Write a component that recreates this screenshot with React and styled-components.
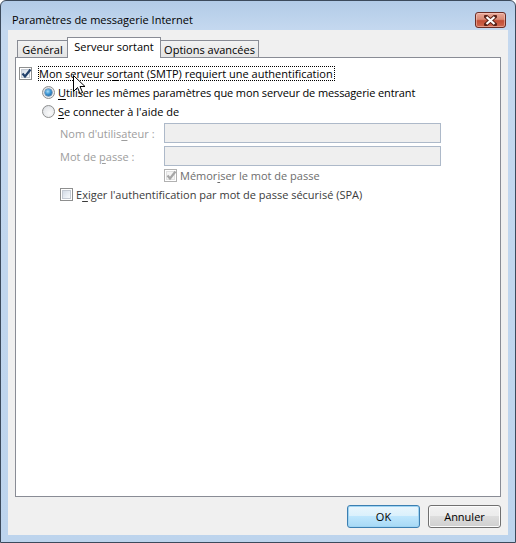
import React from "react";
import styled, { createGlobalStyle, css } from "styled-components";

const Global = createGlobalStyle`
  html, body { margin: 0; padding: 0; }
  body {
    width: 516px; height: 543px; overflow: hidden; background: #fff;
    font-family: "Open Sans", "Noto Sans", sans-serif;
  }
  * { box-sizing: border-box; }
`;

const Window = styled.div`
  position: relative;
  width: 516px;
  height: 543px;
  border: 1px solid #3c4a5c;
  border-radius: 6px 6px 0 0;
  background: linear-gradient(to bottom, #b2cbe7 0px, #c4d8ef 28px, #bdd4ed 100%);
  display: flex;
  flex-direction: column;
  padding: 0 7px 7px 7px;
  font-size: 11px;
  color: #000;
`;

const TitleBar = styled.div`
  height: 29px;
  display: flex;
  align-items: flex-start;
  justify-content: space-between;
  padding: 10px 2px 0 4px;
`;

const Title = styled.div`
  font-size: 11px;
  line-height: 16px;
  margin-top: 1px;
  color: #000;
`;

const CloseButton = styled.div`
  width: 31px;
  height: 16px;
  margin-top: 1px;
  border: 1px solid #6b2c24;
  border-radius: 3px;
  background: linear-gradient(to bottom, #e9a99a 0%, #d98a75 45%, #c24d35 55%, #d0694f 100%);
  box-shadow: inset 0 0 0 1px rgba(255, 220, 210, 0.45);
  display: flex;
  align-items: center;
  justify-content: center;
`;

const Client = styled.div`
  flex: 1;
  background: #f0f0f0;
  display: flex;
  flex-direction: column;
  padding: 7px;
`;

const TabStrip = styled.div`
  display: flex;
  align-items: flex-end;
  height: 20px;
  padding-left: 2px;
  position: relative;
  z-index: 1;
`;

const Tab = styled.div`
  width: ${(p) => p.$w}px;
  margin-left: ${(p) => (p.$first ? 0 : -1)}px;
  border: 1px solid #898c95;
  border-bottom: none;
  display: flex;
  justify-content: center;
  line-height: 15px;
  ${(p) =>
    p.$active
      ? css`
          height: 21px;
          margin-bottom: -1px;
          background: #fff;
          padding-top: 1px;
          position: relative;
          z-index: 2;
        `
      : css`
          height: 17px;
          background: linear-gradient(to bottom, #f2f2f2, #e4e4e4);
          padding-top: 1px;
        `}
`;

const Panel = styled.div`
  flex: 1;
  background: #fff;
  border: 1px solid #898c95;
  padding-top: 6px;
  display: flex;
  flex-direction: column;
`;

const Row = styled.div`
  display: flex;
  align-items: center;
  height: ${(p) => p.$h || 19}px;
  margin-top: ${(p) => p.$mt || 0}px;
  padding-left: ${(p) => p.$indent}px;
  white-space: nowrap;
`;

const Box = styled.span`
  width: 13px;
  height: 13px;
  flex: none;
  border: 1px solid ${(p) => (p.$disabled ? "#b1b1b1" : "#8e8f8f")};
  background: #fff;
  padding: 1px;
  display: flex;
  margin-right: ${(p) => p.$gap}px;
  span {
    flex: 1;
    background: ${(p) =>
      p.$disabled
        ? "#f4f4f4"
        : "linear-gradient(135deg, #d3dbe6 0%, #e9eef4 60%, #f7f9fb 100%)"};
    border: 1px solid ${(p) => (p.$disabled ? "#e0e0e0" : "#c3c9d2")};
    position: relative;
  }
  svg { position: absolute; left: -1px; top: -2px; }
`;

const Radio = styled.span`
  width: 13px;
  height: 13px;
  flex: none;
  border-radius: 50%;
  border: 1px solid #8e8f8f;
  background: radial-gradient(circle at 60% 65%, #fafafa 0%, #e7e9ec 60%, #cfd3d8 100%);
  display: flex;
  align-items: center;
  justify-content: center;
  margin-right: 3px;
  &::after {
    content: "";
    display: ${(p) => (p.$checked ? "block" : "none")};
    width: 7px;
    height: 7px;
    border-radius: 50%;
    background: radial-gradient(circle at 40% 35%, #a9dcf7 0%, #3a95d4 45%, #1b4f86 100%);
    box-shadow: 0 0 0 0.5px #2a5b8c;
  }
`;

const Label = styled.span`
  color: ${(p) => p.$color || "#000"};
  line-height: 13px;
  letter-spacing: ${(p) => p.$ls || 0}px;
  ${(p) =>
    p.$focus &&
    css`
      outline: 1px dotted #000;
      outline-offset: 0px;
      padding: 0 1px 0 0;
    `}
  u { text-decoration: underline; text-underline-offset: 2px; }
`;

const FieldLabel = styled.span`
  width: 104px;
  flex: none;
  color: #9d9d9d;
  u { text-underline-offset: 2px; }
`;

const Input = styled.div`
  width: 277px;
  height: 20px;
  border: 1px solid #adb9c9;
  background: #efefef;
`;

const ButtonRow = styled.div`
  display: flex;
  justify-content: flex-end;
  gap: 8px;
  margin-top: 8px;
`;

const Button = styled.div`
  width: 73px;
  height: 23px;
  border-radius: 3px;
  display: flex;
  align-items: center;
  justify-content: center;
  border: 1px solid ${(p) => (p.$default ? "#3c7fb1" : "#707070")};
  background: ${(p) =>
    p.$default
      ? "linear-gradient(to bottom, #eaf6fd 0%, #d9f0fc 50%, #bee6fd 50%, #a7d9f5 100%)"
      : "linear-gradient(to bottom, #f2f2f2 0%, #ebebeb 50%, #dddddd 50%, #cfcfcf 100%)"};
  box-shadow: inset 0 0 0 1px ${(p) => (p.$default ? "#9fd4f3" : "#fcfcfc")};
`;

const Cursor = styled.svg`
  position: absolute;
  left: 72px;
  top: 74px;
`;

const Check = ({ color }) => (
  <svg width="11" height="11" viewBox="0 0 11 11">
    <path d="M1.5 5.5 L4 8.5 L9.5 1.5" fill="none" stroke={color} strokeWidth="2.2" />
  </svg>
);

const CheckBox = ({ checked, disabled, gap }) => (
  <Box $disabled={disabled} $gap={gap}>
    <span>{checked && <Check color={disabled ? "#a6a6a6" : "#22416b"} />}</span>
  </Box>
);

export default function App() {
  return (
    <>
      <Global />
      <Window>
        <TitleBar>
          <Title>Paramètres de messagerie Internet</Title>
          <CloseButton>
            <svg width="13" height="11" viewBox="0 0 13 11">
              <path d="M2 1.5 L11 9.5 M11 1.5 L2 9.5" stroke="#5a2218" strokeWidth="4" strokeLinecap="square" />
              <path d="M2.5 2 L10.5 9 M10.5 2 L2.5 9" stroke="#ffffff" strokeWidth="2.2" />
            </svg>
          </CloseButton>
        </TitleBar>
        <Client>
          <TabStrip>
            <Tab $w={51} $first>Général</Tab>
            <Tab $w={94} $active>Serveur sortant</Tab>
            <Tab $w={99}>Options avancées</Tab>
          </TabStrip>
          <Panel>
            <Row $indent={3}>
              <CheckBox checked gap={7} />
              <Label $focus>
                Mon serveur s<u>o</u>rtant (SMTP) requiert une authentification
              </Label>
            </Row>
            <Row $indent={26}>
              <Radio $checked />
              <Label $ls={-0.12}>
                <u>U</u>tiliser les mêmes paramètres que mon serveur de messagerie entrant
              </Label>
            </Row>
            <Row $indent={26}>
              <Radio />
              <Label>
                <u>S</u>e connecter à l'aide de
              </Label>
            </Row>
            <Row $indent={44} $h={20} $mt={2}>
              <FieldLabel>
                Nom d'utilis<u>a</u>teur :
              </FieldLabel>
              <Input />
            </Row>
            <Row $indent={44} $h={20} $mt={3}>
              <FieldLabel>
                Mot de <u>p</u>asse :
              </FieldLabel>
              <Input />
            </Row>
            <Row $indent={148}>
              <CheckBox checked disabled gap={3} />
              <Label $color="#6d6d6d">
                Mémor<u>i</u>ser le mot de passe
              </Label>
            </Row>
            <Row $indent={44}>
              <CheckBox gap={3} />
              <Label $color="#3b3b3b">
                E<u>x</u>iger l'authentification par mot de passe sécurisé (SPA)
              </Label>
            </Row>
          </Panel>
          <ButtonRow>
            <Button $default>OK</Button>
            <Button>Annuler</Button>
          </ButtonRow>
        </Client>
        <Cursor width="13" height="21" viewBox="0 0 13 21">
          <path d="M0.5 0.5 L0.5 16.5 L4.5 12.5 L7 18.5 L9.5 17.5 L7 11.5 L12 11.5 Z" fill="#fff" stroke="#000" strokeWidth="1" strokeLinejoin="miter" />
        </Cursor>
      </Window>
    </>
  );
}
